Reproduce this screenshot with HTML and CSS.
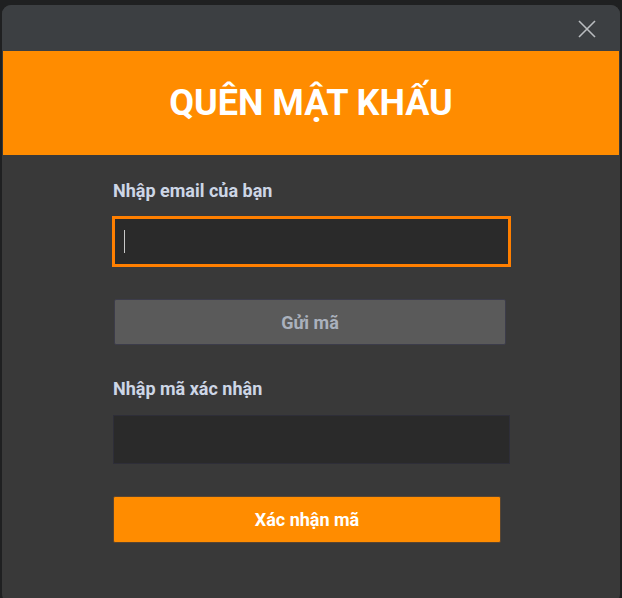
FILE: index.html
```html
<!DOCTYPE html>
<html lang="vi">
<head>
<meta charset="utf-8">
<title>Quên mật khẩu</title>
<link rel="stylesheet" href="styles.css">
</head>
<body>
<div class="modal">
  <div class="topbar">
    <button class="close" aria-label="Đóng">
      <svg width="18" height="18" viewBox="0 0 18 18"><path d="M1 1L17 17M17 1L1 17" stroke="#b9bcbf" stroke-width="1.6" fill="none"/></svg>
    </button>
  </div>
  <div class="banner"><h1 class="title">QUÊN MẬT KHẤU</h1></div>
  <div class="content">
    <label class="label label-first">Nhập email của bạn</label>
    <div class="field field-active"><span class="caret"></span></div>
    <button class="btn btn-send">Gửi mã</button>
    <label class="label label-second">Nhập mã xác nhận</label>
    <div class="field field-code"></div>
    <button class="btn btn-confirm">Xác nhận mã</button>
  </div>
</div>
</body>
</html>
```
FILE: styles.css
```css
html, body {
  margin: 0;
  padding: 0;
  background: #1f2021;
  height: 598px;
  overflow: hidden;
}
body {
  font-family: Roboto, "Liberation Sans", sans-serif;
  padding: 5px 2px 0 2px;
  box-sizing: border-box;
}
.modal {
  background: #393939;
  height: 598px;
  border-radius: 9px;
  overflow: hidden;
  display: flex;
  flex-direction: column;
}
.topbar {
  height: 46px;
  background: #3c3f42;
  display: flex;
  justify-content: flex-end;
  align-items: flex-start;
  flex-shrink: 0;
}
.close {
  background: none;
  border: 0;
  padding: 0;
  margin: 15px 24px 0 0;
  width: 18px;
  height: 18px;
  display: flex;
  cursor: pointer;
}
.banner {
  background: #ff8c00;
  height: 104px;
  margin: 0 1px;
  display: flex;
  align-items: center;
  justify-content: center;
  flex-shrink: 0;
}
.title {
  margin: 0;
  color: #ffffff;
  font-size: 36px;
  font-weight: 700;
  line-height: 40px;
}
.content {
  display: flex;
  flex-direction: column;
  align-items: flex-start;
  padding: 25px 0 0 110px;
}
.label {
  color: #cdd6e6;
  font-size: 18px;
  font-weight: 700;
  line-height: 22px;
  padding-left: 1px;
}
.label-first { margin-bottom: 14px; }
.label-second { margin-bottom: 15px; }
.field {
  background: #2a2a2a;
  box-sizing: border-box;
  display: flex;
  align-items: center;
}
.field-active {
  width: 399px;
  height: 51px;
  border: 3px solid #ff7f00;
  margin-bottom: 32px;
  padding-left: 9px;
}
.caret {
  width: 1px;
  height: 23px;
  background: #c8c8c8;
}
.field-code {
  width: 397px;
  height: 49px;
  border: 1px solid #2e2e38;
  margin-left: 1px;
  margin-bottom: 32px;
}
.btn {
  font-family: Roboto, "Liberation Sans", sans-serif;
  font-size: 18px;
  font-weight: 700;
  box-sizing: border-box;
  border-radius: 2px;
  padding: 0;
}
.btn-send {
  width: 392px;
  height: 46px;
  margin-left: 2px;
  background: #5a5a5a;
  border: 1px solid #3c3c4a;
  color: #aab1bd;
  margin-bottom: 33px;
}
.btn-confirm {
  width: 388px;
  height: 47px;
  margin-left: 1px;
  background: #ff8c00;
  border: 1px solid #5a4530;
  color: #ffffff;
}
```
